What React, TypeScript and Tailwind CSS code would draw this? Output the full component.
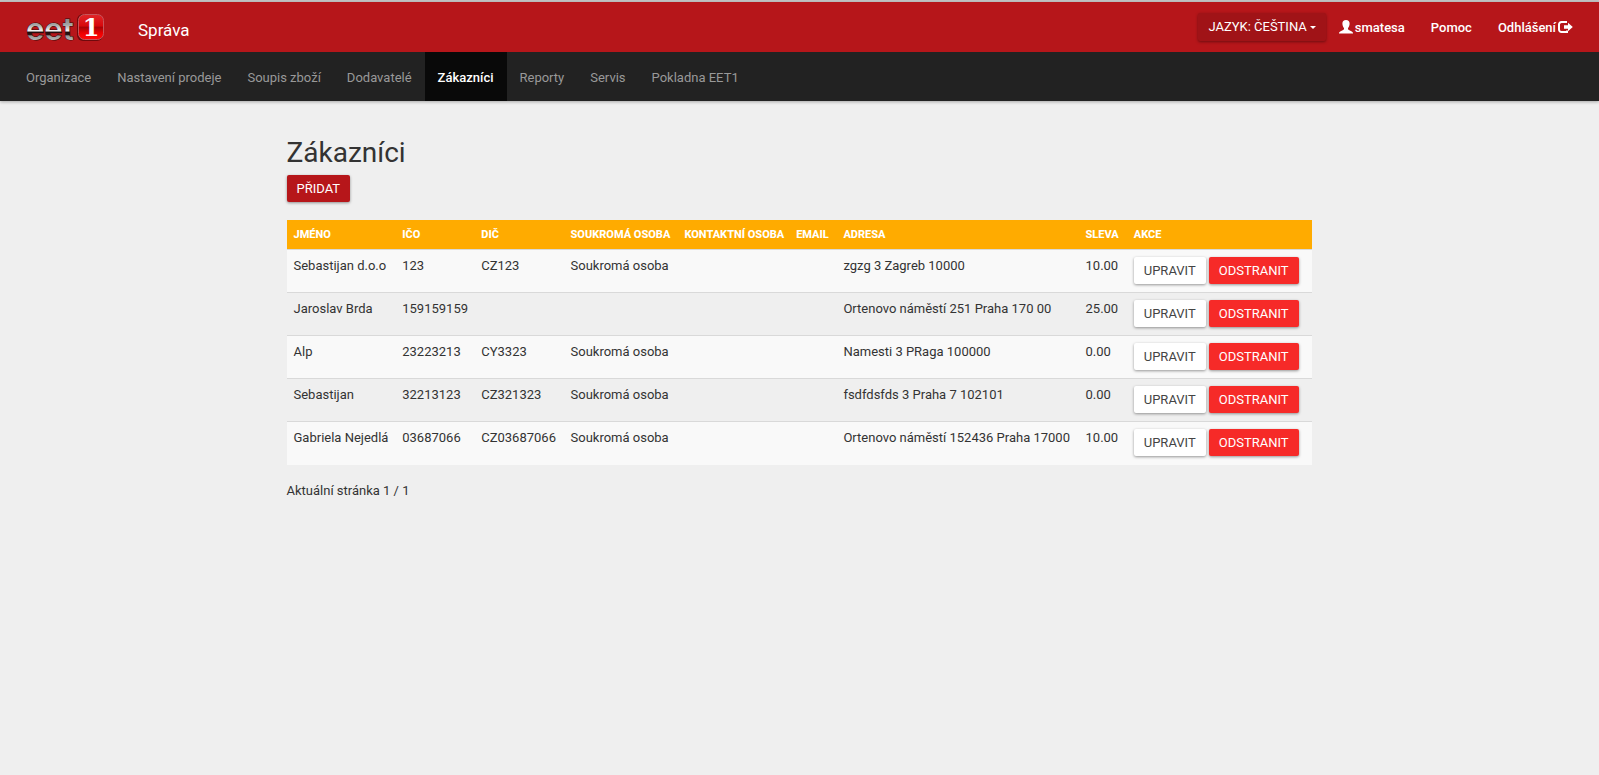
import { clsx } from 'clsx';

type Customer = {
  name: string;
  ico: string;
  dic: string;
  privatePerson: boolean;
  contact: string;
  email: string;
  address: string;
  discount: string;
};

const navItems = [
  'Organizace',
  'Nastavení prodeje',
  'Soupis zboží',
  'Dodavatelé',
  'Zákazníci',
  'Reporty',
  'Servis',
  'Pokladna EET1',
];

const columns = [
  { label: 'Jméno', width: 'w-[10.6%]' },
  { label: 'IČO', width: 'w-[7.7%]' },
  { label: 'DIČ', width: 'w-[8.7%]' },
  { label: 'Soukromá osoba', width: 'w-[11.1%]' },
  { label: 'Kontaktní osoba', width: 'w-[10.9%]' },
  { label: 'Email', width: 'w-[4.6%]' },
  { label: 'Adresa', width: 'w-[23.6%]' },
  { label: 'Sleva', width: 'w-[4.7%]' },
  { label: 'Akce', width: 'w-[18.1%]' },
];

const customers: Customer[] = [
  { name: 'Sebastijan d.o.o', ico: '123', dic: 'CZ123', privatePerson: true, contact: '', email: '', address: 'zgzg 3 Zagreb 10000', discount: '10.00' },
  { name: 'Jaroslav Brda', ico: '159159159', dic: '', privatePerson: false, contact: '', email: '', address: 'Ortenovo náměstí 251 Praha 170 00', discount: '25.00' },
  { name: 'Alp', ico: '23223213', dic: 'CY3323', privatePerson: true, contact: '', email: '', address: 'Namesti 3 PRaga 100000', discount: '0.00' },
  { name: 'Sebastijan', ico: '32213123', dic: 'CZ321323', privatePerson: true, contact: '', email: '', address: 'fsdfdsfds 3 Praha 7 102101', discount: '0.00' },
  { name: 'Gabriela Nejedlá', ico: '03687066', dic: 'CZ03687066', privatePerson: true, contact: '', email: '', address: 'Ortenovo náměstí 152436 Praha 17000', discount: '10.00' },
];

function Logo() {
  return (
    <svg width="80" height="44" viewBox="0 0 80 44" role="img" aria-label="eet1">
      <defs>
        <linearGradient id="chrome" gradientUnits="userSpaceOnUse" x1="0" y1="13" x2="0" y2="36">
          <stop offset="0" stopColor="#858585" />
          <stop offset="0.3" stopColor="#a5a5a5" />
          <stop offset="0.56" stopColor="#f5f5f5" />
          <stop offset="0.62" stopColor="#1c0c0c" />
          <stop offset="0.72" stopColor="#2a1616" />
          <stop offset="0.78" stopColor="#999" />
          <stop offset="1" stopColor="#bbb" />
        </linearGradient>
        <linearGradient id="badge" x1="0" y1="0" x2="0" y2="1">
          <stop offset="0" stopColor="#e0262a" />
          <stop offset="0.45" stopColor="#d8080c" />
          <stop offset="0.52" stopColor="#a80306" />
          <stop offset="0.75" stopColor="#ee0000" />
          <stop offset="1" stopColor="#ff0a0a" />
        </linearGradient>
      </defs>
      <text
        x="0"
        y="35"
        fontFamily="Inter, sans-serif"
        fontSize="31"
        fontWeight="600"
        fill="url(#chrome)"
        stroke="#3a0a0a"
        strokeWidth="1"
        paintOrder="stroke"
      >
        eet
      </text>
      <rect x="51" y="9" width="26" height="27" rx="6" fill="#6e0a0d" />
      <rect x="52.500" y="9.500" width="25" height="25" rx="6" fill="url(#badge)" stroke="#c9545a" strokeWidth="1" />
      <text x="65" y="31" textAnchor="middle" fontFamily="'DejaVu Serif', serif" fontSize="24" fontWeight="700" fill="#fff">
        1
      </text>
    </svg>
  );
}

function UserIcon() {
  return (
    <svg className="mb-[3px] h-[14px] w-[14px]" viewBox="0 0 14 14" fill="currentColor" aria-hidden="true">
      <path d="M7 0C4.600 0 3.400 1.400 3.400 3.600c0 1.900.6 3.500 1.600 4.500v.9c0 .5-.3.800-.9 1.100L1.200 11.500C.4 11.900 0 12.300 0 13v.6h14V13c0-.7-.4-1.100-1.200-1.500L9.900 10.100c-.6-.3-.9-.6-.9-1.100v-.9c1-1 1.600-2.600 1.600-4.500C10.600 1.400 9.400 0 7 0z" />
    </svg>
  );
}

function LogoutIcon() {
  return (
    <svg className="mb-[3px] h-[12px] w-[15px]" viewBox="0 0 15 12" aria-hidden="true">
      <path d="M9 1H3.500A2.500 2.500 0 0 0 1 3.500v5A2.500 2.500 0 0 0 3.500 11H9V9.500" fill="none" stroke="currentColor" strokeWidth="2" />
      <path d="M10 1.800 14.800 6 10 10.200V7.800H6V4.200h4z" fill="currentColor" />
    </svg>
  );
}

function Button({ variant, children }: { variant: 'primary' | 'default' | 'danger'; children: string }) {
  return (
    <button
      type="button"
      className={clsx(
        'h-[27px] rounded-xs px-[10px] text-[13px] leading-[27px] uppercase shadow-[0_1px_3px_rgba(0,0,0,0.4)]',
        variant === 'primary' && 'bg-[#b6161a] text-white',
        variant === 'default' && 'bg-white text-[#444]',
        variant === 'danger' && 'bg-[#f62a28] text-white',
      )}
    >
      {children}
    </button>
  );
}

export default function App() {
  return (
    <div className="min-h-screen border-t-2 border-[#c4c4c4] bg-[#efefef] font-['Roboto',sans-serif] text-[13px] leading-[18px] text-[#333]">
      <header className="shadow-[0_1px_3px_rgba(0,0,0,0.3)]">
        <div className="flex h-[50px] items-center justify-between bg-[#b6161a] px-[26px] text-white">
          <div className="flex items-center gap-8">
            <a href="#">
              <Logo />
            </a>
            <a href="#" className="pt-[6px] text-[17px] leading-6">Správa</a>
          </div>
          <div className="flex items-center">
            <button
              type="button"
              className="mr-[13px] flex h-7 items-center gap-[3px] rounded-xs bg-[#a01317] px-[10px] uppercase shadow-[0_1px_3px_rgba(0,0,0,0.4)]"
            >
              Jazyk: Čeština
              <span className="border-x-3 border-t-3 border-x-transparent border-t-white" />
            </button>
            <nav className="flex items-center gap-[26px] pt-[2px] font-medium">
              <a href="#" className="flex items-center gap-[2px]">
                <UserIcon />
                smatesa
              </a>
              <a href="#">Pomoc</a>
              <a href="#" className="flex items-center gap-[2px]">
                Odhlášení
                <LogoutIcon />
              </a>
            </nav>
          </div>
        </div>
        <nav className="flex h-[49px] bg-[#222] px-[13px]">
          {navItems.map((item) => (
            <a
              key={item}
              href="#"
              className={clsx(
                'flex items-center px-[13px] pt-[2px]',
                item === 'Zákazníci' ? 'bg-[#090909] font-medium text-white' : 'text-[#999]',
              )}
            >
              {item}
            </a>
          ))}
        </nav>
      </header>

      <main className="mx-auto w-2/3 px-5 pt-[35px]">
        <h1 className="mb-[5px] text-[28px] leading-[34px]">Zákazníci</h1>
        <Button variant="primary">Přidat</Button>

        <table className="mt-[18px] w-full table-fixed border-collapse text-left">
          <thead>
            <tr className="bg-[#ffab00] text-[11px] text-white uppercase">
              {columns.map((col) => (
                <th key={col.label} className={clsx('px-[7px] pt-[6px] pb-[5px] font-extrabold whitespace-nowrap', col.width)}>
                  {col.label}
                </th>
              ))}
            </tr>
          </thead>
          <tbody>
            {customers.map((c) => (
              <tr key={c.ico} className="h-[43px] border-t border-[#d9d9d9] align-top whitespace-nowrap odd:bg-[#f9f9f9]">
                <td className="p-[7px]">{c.name}</td>
                <td className="p-[7px]">{c.ico}</td>
                <td className="p-[7px]">{c.dic}</td>
                <td className="p-[7px]">{c.privatePerson ? 'Soukromá osoba' : ''}</td>
                <td className="p-[7px]">{c.contact}</td>
                <td className="p-[7px]">{c.email}</td>
                <td className="p-[7px]">{c.address}</td>
                <td className="p-[7px]">{c.discount}</td>
                <td className="p-[7px]">
                  <div className="flex gap-[3px]">
                    <Button variant="default">Upravit</Button>
                    <Button variant="danger">Odstranit</Button>
                  </div>
                </td>
              </tr>
            ))}
          </tbody>
        </table>

        <p className="mt-[17px]">Aktuální stránka 1 / 1</p>
      </main>
    </div>
  );
}
